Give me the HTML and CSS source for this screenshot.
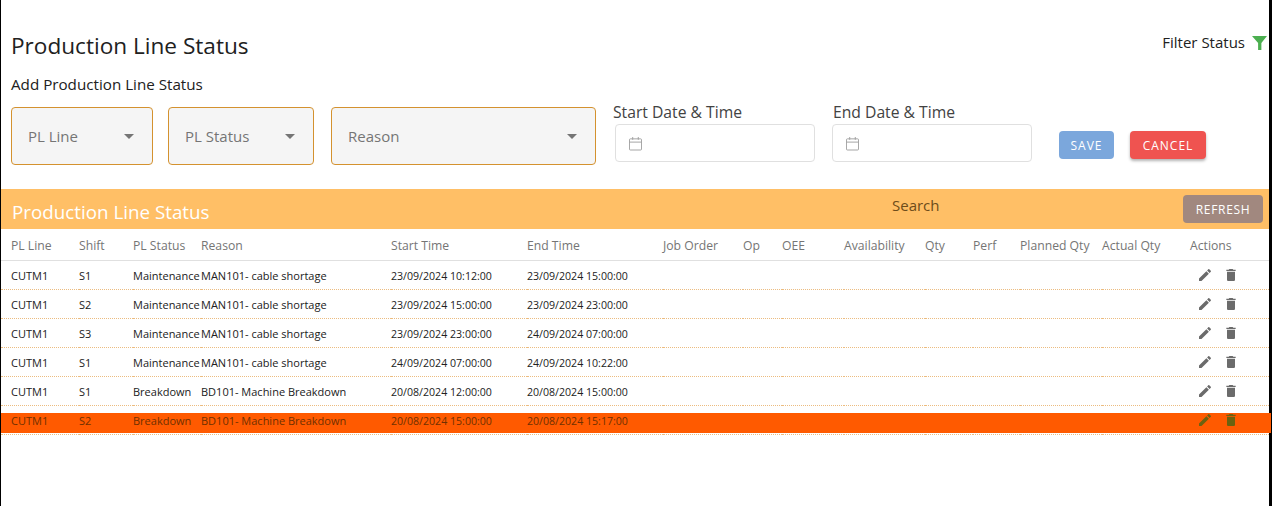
FILE: index.html
```html
<!DOCTYPE html>
<html lang="en">
<head>
    <meta charset="UTF-8">
    <title>Production Line Status</title>
    <link rel="stylesheet" href="styles.css">
</head>
<body>
    <div class="page">
        <div class="title-row">
            <h1>Production Line Status</h1>
            <div class="filter-status">
                Filter Status
                <svg class="funnel" viewBox="0 0 16 16"><path d="M0 1h16L10 8.500V16H6.500V8.500z"/></svg>
            </div>
        </div>
        <h2>Add Production Line Status</h2>

        <form class="add-form">
            <div class="select select-line"><span>PL Line</span><i class="caret"></i></div>
            <div class="select select-status"><span>PL Status</span><i class="caret"></i></div>
            <div class="select select-reason"><span>Reason</span><i class="caret"></i></div>
            <div class="date-field date-start">
                <label>Start Date &amp; Time</label>
                <div class="date-input">
                    <svg class="calendar" viewBox="0 0 14 16"><path d="M1.500 3h11a1 1 0 0 1 1 1v10a1 1 0 0 1-1 1h-11a1 1 0 0 1-1-1V4a1 1 0 0 1 1-1zM.5 6.500h13M4 1v3M10 1v3"/></svg>
                </div>
            </div>
            <div class="date-field date-end">
                <label>End Date &amp; Time</label>
                <div class="date-input">
                    <svg class="calendar" viewBox="0 0 14 16"><path d="M1.500 3h11a1 1 0 0 1 1 1v10a1 1 0 0 1-1 1h-11a1 1 0 0 1-1-1V4a1 1 0 0 1 1-1zM.5 6.500h13M4 1v3M10 1v3"/></svg>
                </div>
            </div>
            <button type="button" class="btn btn-save">SAVE</button>
            <button type="button" class="btn btn-cancel">CANCEL</button>
        </form>

        <div class="band">
            <div class="band-title">Production Line Status</div>
            <div class="band-search">Search</div>
            <button type="button" class="btn btn-refresh">REFRESH</button>
        </div>

        <table>
            <colgroup>
                <col class="c-line"><col class="c-shift"><col class="c-status"><col class="c-reason">
                <col class="c-time"><col class="c-time"><col class="c-job"><col class="c-op">
                <col class="c-oee"><col class="c-avail"><col class="c-qty"><col class="c-perf">
                <col class="c-planned"><col class="c-actual"><col>
            </colgroup>
            <thead>
                <tr>
                    <th>PL Line</th><th>Shift</th><th>PL Status</th><th>Reason</th>
                    <th>Start Time</th><th>End Time</th><th>Job Order</th><th>Op</th>
                    <th>OEE</th><th>Availability</th><th>Qty</th><th>Perf</th>
                    <th>Planned Qty</th><th>Actual Qty</th><th>Actions</th>
                </tr>
            </thead>
            <tbody id="rows"></tbody>
        </table>
    </div>

    <script>
        const rows = [
            ["CUTM1", "S1", "Maintenance", "MAN101- cable shortage", "23/09/2024 10:12:00", "23/09/2024 15:00:00"],
            ["CUTM1", "S2", "Maintenance", "MAN101- cable shortage", "23/09/2024 15:00:00", "23/09/2024 23:00:00"],
            ["CUTM1", "S3", "Maintenance", "MAN101- cable shortage", "23/09/2024 23:00:00", "24/09/2024 07:00:00"],
            ["CUTM1", "S1", "Maintenance", "MAN101- cable shortage", "24/09/2024 07:00:00", "24/09/2024 10:22:00"],
            ["CUTM1", "S1", "Breakdown", "BD101- Machine Breakdown", "20/08/2024 12:00:00", "20/08/2024 15:00:00"],
            ["CUTM1", "S2", "Breakdown", "BD101- Machine Breakdown", "20/08/2024 15:00:00", "20/08/2024 15:17:00", true]
        ];
        const actions = `<div class="actions">
            <svg viewBox="0 0 24 24"><path d="M3 17.250V21h3.750L17.810 9.940l-3.750-3.750L3 17.250zM20.710 7.040c.39-.39.39-1.020 0-1.410l-2.340-2.340c-.39-.39-1.020-.39-1.410 0l-1.830 1.830 3.750 3.750 1.830-1.830z"/></svg>
            <svg viewBox="0 0 24 24"><path d="M6 19c0 1.100.9 2 2 2h8c1.100 0 2-.9 2-2V7H6v12zM19 4h-3.500l-1-1h-5l-1 1H5v2h14V4z"/></svg>
        </div>`;
        const tbody = document.getElementById('rows');

        rows.forEach(row => {
            const tr = document.createElement('tr');
            if (row[6]) tr.className = 'row-alert';
            for (let i = 0; i < 15; i++) {
                const td = document.createElement('td');
                if (i < 6) td.textContent = row[i];
                if (i === 4 || i === 5) td.className = 'cell-time';
                if (i === 14) td.innerHTML = actions;
                tr.appendChild(td);
            }
            tbody.appendChild(tr);
        });
    </script>
</body>
</html>
```

FILE: styles.css
```css
* {
    box-sizing: border-box;
}
html, body {
    margin: 0;
    height: 100%;
    overflow: hidden;
}
body {
    font-family: "Open Sans", Arial, sans-serif;
    color: #212121;
    background: #fff;
}
.page {
    height: 100%;
    padding-top: 30px;
    border-left: 1px solid #000;
    border-right: 3px solid #000;
}
.title-row {
    display: flex;
    justify-content: space-between;
    padding: 0 2px 0 10px;
    height: 32px;
}
h1 {
    margin: 0;
    font-size: 22.600px;
    font-weight: 400;
    line-height: 32px;
}
.filter-status {
    display: flex;
    align-items: center;
    height: 24px;
    font-size: 15px;
}
.funnel {
    width: 15px;
    height: 15px;
    margin-left: 7px;
    fill: #4caf50;
}
h2 {
    margin: 11px 0 0 10px;
    font-size: 15.200px;
    font-weight: 400;
    line-height: 22px;
}
.add-form {
    display: flex;
    align-items: flex-start;
    height: 86px;
    margin-top: 8px;
    padding-left: 10px;
}
.select {
    display: flex;
    align-items: center;
    justify-content: space-between;
    height: 58px;
    margin-top: 4px;
    padding: 0 18px 0 16px;
    background: #f5f5f5;
    border: 1px solid #d4922f;
    border-radius: 4px;
    font-size: 15px;
    color: #757575;
}
.select-line {
    width: 142px;
    margin-right: 15px;
}
.select-status {
    width: 146px;
    margin-right: 17px;
}
.select-reason {
    width: 265px;
    margin-right: 17px;
}
.caret {
    width: 0;
    height: 0;
    border-left: 5px solid transparent;
    border-right: 5px solid transparent;
    border-top: 5px solid #757575;
}
.date-field label {
    display: block;
    height: 21px;
    font-size: 15.700px;
    line-height: 18px;
    color: #424242;
}
.date-start {
    width: 202px;
    margin-right: 17px;
}
.date-end {
    width: 200px;
    margin-right: 27px;
}
.date-input {
    display: flex;
    align-items: center;
    height: 38px;
    padding-left: 13px;
    border: 1px solid #e0e0e0;
    border-radius: 4px;
}
.date-start .date-input {
    margin-left: 2px;
}
.date-end label {
    margin-left: 1px;
}
.calendar {
    width: 13px;
    height: 15px;
    fill: none;
    stroke: #9e9e9e;
    stroke-width: 1;
}
.btn {
    height: 28px;
    padding: 0;
    border: 0;
    border-radius: 4px;
    font-family: "Open Sans", Arial, sans-serif;
    font-size: 12px;
    letter-spacing: 1px;
    color: #fff;
}
.btn-save {
    width: 55px;
    margin: 28px 16px 0 0;
    background: #7ba7dc;
}
.btn-cancel {
    width: 76px;
    margin-top: 28px;
    background: #ef5350;
    box-shadow: 0 2px 3px rgba(0, 0, 0, .3);
}
.band {
    display: flex;
    align-items: center;
    height: 40px;
    padding: 0 6px 0 11px;
    background: #ffbf66;
}
.band-title {
    width: 880px;
    padding-top: 5px;
    font-size: 18.800px;
    color: #fff;
}
.band-search {
    flex: 1;
    padding-bottom: 9px;
    font-size: 15px;
    color: #6d4c1a;
}
.btn-refresh {
    width: 80px;
    letter-spacing: .7px;
    background: #a1887f;
}
table {
    width: 100%;
    border-collapse: collapse;
    table-layout: fixed;
}
.c-line { width: 78px; }
.c-shift { width: 54px; }
.c-status { width: 68px; }
.c-reason { width: 190px; }
.c-time { width: 136px; }
.c-job { width: 80px; }
.c-op { width: 39px; }
.c-oee { width: 62px; }
.c-avail { width: 81px; }
.c-qty { width: 48px; }
.c-perf { width: 47px; }
.c-planned { width: 82px; }
.c-actual { width: 88px; }
th {
    height: 31px;
    padding: 2px 0 0;
    border-bottom: 1px solid #e0e0e0;
    font-size: 12.200px;
    font-weight: 400;
    text-align: left;
    color: #757575;
}
td {
    height: 29px;
    padding: 2px 0 0;
    border-bottom: 1px dotted #ecbc80;
    font-size: 11px;
    white-space: nowrap;
}
td.cell-time {
    font-size: 10.600px;
}
th:first-child, td:first-child {
    padding-left: 10px;
}
.actions {
    display: flex;
    gap: 10px;
    margin-top: -2px;
    padding-left: 7px;
}
.actions svg {
    width: 16px;
    height: 16px;
    fill: #6b6b6b;
}
.row-alert td {
    color: #703000;
    background: linear-gradient(#ff5a00, #ff5a00) no-repeat 0 7px / 100% 20px;
}
.row-alert .actions svg {
    fill: #6b6210;
}
.row-alert td:last-child {
    position: relative;
}
.row-alert td:last-child::after {
    content: "";
    position: absolute;
    top: 7px;
    left: 100%;
    width: 2px;
    height: 20px;
    background: #ff5a00;
}
```
